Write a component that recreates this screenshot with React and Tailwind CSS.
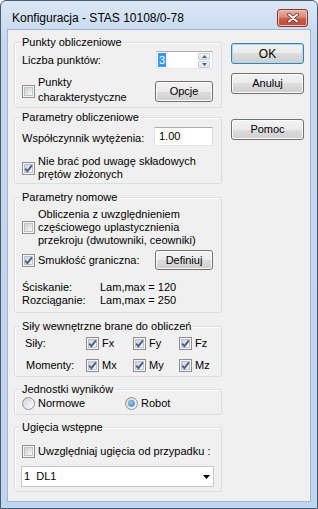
import React from 'react';

function Check({ checked }) {
  return (
    <span className="relative flex h-[13px] w-[13px] shrink-0 items-center justify-center border border-[#8e8f8f] bg-[#f4f4f4]">
      <span className="h-[9px] w-[9px] border border-[#c0c4ca] bg-[linear-gradient(135deg,#cdd1d6,#f7f7f7)]" />
      {checked && (
        <svg className="absolute left-0 top-0" width="11" height="11" viewBox="0 0 11 11">
          <path d="M2.2 5.6 L4.4 8.2 L8.9 2.4" fill="none" stroke="#4a5f97" strokeWidth="1.9" />
        </svg>
      )}
    </span>
  );
}

function Radio({ checked }) {
  return (
    <span className="flex h-[13px] w-[13px] shrink-0 items-center justify-center rounded-full border border-[#8e8f8f] bg-[linear-gradient(135deg,#cfd3d8,#ffffff)]">
      {checked && (
        <span className="h-[5px] w-[5px] rounded-full bg-[radial-gradient(circle_at_40%_35%,#9fd8fb,#1a64ad)] shadow-[0_0_0_1px_#6aa5d6]" />
      )}
    </span>
  );
}

function Btn({ children, primary, className }) {
  return (
    <div
      className={`flex shrink-0 items-center justify-center rounded-[3px] border bg-[linear-gradient(#f2f2f2_0%,#ebebeb_50%,#dddddd_50%,#cfcfcf_100%)] ${
        primary
          ? 'border-[#3c7fb1] shadow-[inset_0_0_0_1px_#a6def8]'
          : 'border-[#707070] shadow-[inset_0_0_0_1px_#fcfcfc]'
      } ${className}`}
    >
      {children}
    </div>
  );
}

function Group({ title, className, children }) {
  return (
    <div className={`relative shrink-0 rounded-[3px] border border-[#d5dfe5] shadow-[inset_1px_1px_0_#ffffff] ${className}`}>
      <span className="absolute -top-[7px] left-[5px] bg-[#f0f0f0] px-[2px] leading-[13px]">{title}</span>
      {children}
    </div>
  );
}

function CheckLabel({ checked, children }) {
  return (
    <div className="flex items-center gap-[3px]">
      <Check checked={checked} />
      <span className="whitespace-nowrap leading-[13px]">{children}</span>
    </div>
  );
}

export default function App() {
  return (
    <div className="h-[509px] w-[318px] overflow-hidden font-['Liberation_Sans',Arial,sans-serif] text-[11px] text-black">
      <div className="flex h-full w-full flex-col rounded-t-[6px] border border-[#4a5b70] bg-[linear-gradient(#dbe7f5,#c4d8ef_40px,#c0d5ee)] px-[6px] pb-[6px]">
        {/* title bar */}
        <div className="flex h-[28px] shrink-0 items-start justify-between pl-[5px] pr-[3px] pt-[8px]">
          <span className="text-[12px] leading-[18px]">Konfiguracja - STAS 10108/0-78</span>
          <div className="flex h-[18px] w-[31px] items-center justify-center rounded-[3px] border border-[#8a352b] bg-[linear-gradient(#eab1a6_0%,#d98a7b_45%,#c75a47_55%,#c24a36_100%)] shadow-[inset_0_0_0_1px_#f0c3ba]">
            <svg width="12" height="10" viewBox="0 0 12 10">
              <path d="M2 1.5 L10 8.5 M10 1.5 L2 8.5" stroke="#6e2a22" strokeWidth="3.6" strokeLinecap="round" />
              <path d="M2 1.5 L10 8.5 M10 1.5 L2 8.5" stroke="#ffffff" strokeWidth="2" strokeLinecap="round" />
            </svg>
          </div>
        </div>

        {/* client area */}
        <div className="flex flex-1 border border-[#9fb6d2] bg-[#f0f0f0]">
          <div className="flex w-[214px] shrink-0 flex-col pl-[6px] pt-[12px]">
            <Group title="Punkty obliczeniowe" className="h-[66px] w-[208px] pl-[7px] pr-[8px] pt-[8px]">
              <div className="flex h-[18px] items-center justify-between">
                <span>Liczba punktów:</span>
                <div className="flex h-[18px] w-[57px] items-center border border-[#abadb3] border-l-[#e2e3ea] border-r-[#dbdfe6] border-b-[#e3e9ef] bg-white pl-[1px] pr-[2px]">
                  <span className="bg-[#3399ff] px-[1px] leading-[14px] text-white">3</span>
                  <div className="ml-auto flex h-[15px] w-[12px] flex-col gap-[1px]">
                    <div className="flex flex-1 items-center justify-center rounded-[1px] border border-[#c9cdd3] bg-[linear-gradient(#f3f6f9,#dde3ea)]">
                      <svg width="5" height="3" viewBox="0 0 5 3"><path d="M0 3 L2.5 0 L5 3 Z" fill="#4d5c72" /></svg>
                    </div>
                    <div className="flex flex-1 items-center justify-center rounded-[1px] border border-[#c9cdd3] bg-[linear-gradient(#f3f6f9,#dde3ea)]">
                      <svg width="5" height="3" viewBox="0 0 5 3"><path d="M0 0 L2.5 3 L5 0 Z" fill="#4d5c72" /></svg>
                    </div>
                  </div>
                </div>
              </div>
              <div className="mt-[12px] flex h-[21px] items-center justify-between">
                <div className="flex items-center gap-[3px]">
                  <Check />
                  <span className="mb-[3px] leading-[15px]">
                    Punkty
                    <br />
                    charakterystyczne
                  </span>
                </div>
                <Btn className="h-[21px] w-[58px]">Opcje</Btn>
              </div>
            </Group>

            <Group title="Parametry obliczeniowe" className="mt-[9px] h-[67px] w-[208px] pl-[7px] pr-[8px] pt-[9px]">
              <div className="flex h-[19px] items-center justify-between">
                <span className="mt-[3px]">Współczynnik wytężenia:</span>
                <div className="flex h-[19px] w-[59px] items-center border border-[#abadb3] border-l-[#e2e3ea] border-r-[#dbdfe6] border-b-[#e3e9ef] bg-white pl-[4px]">
                  1.00
                </div>
              </div>
              <div className="mt-[9px] flex items-center gap-[3px]">
                <Check checked />
                <span className="whitespace-nowrap leading-[13px]">
                  Nie brać pod uwagę składowych
                  <br />
                  prętów złożonych
                </span>
              </div>
            </Group>

            <Group title="Parametry nomowe" className="mt-[13px] h-[116px] w-[208px] pl-[7px] pr-[8px] pt-[10px]">
              <div className="flex items-center gap-[3px]">
                <Check />
                <span className="whitespace-nowrap leading-[13px]">
                  Obliczenia z uwzględnieniem
                  <br />
                  częściowego uplastycznienia
                  <br />
                  przekroju (dwutowniki, ceowniki)
                </span>
              </div>
              <div className="mt-[3px] flex h-[20px] items-center justify-between">
                <CheckLabel checked>Smukłość graniczna:</CheckLabel>
                <Btn className="h-[20px] w-[58px]">Definiuj</Btn>
              </div>
              <div className="mt-[11px] grid grid-cols-[78px_auto] leading-[13px]">
                <span>Ściskanie:</span>
                <span>Lam,max = 120</span>
                <span>Rozciąganie:</span>
                <span>Lam,max = 250</span>
              </div>
            </Group>

            <Group title="Siły wewnętrzne brane do obliczeń" className="mt-[13px] h-[51px] w-[208px] pl-[10px] pt-[10px]">
              <div className="grid grid-cols-[61px_47px_46px_auto] items-center gap-y-[9px]">
                <span className="leading-[13px]">Siły:</span>
                <CheckLabel checked>Fx</CheckLabel>
                <CheckLabel checked>Fy</CheckLabel>
                <CheckLabel checked>Fz</CheckLabel>
                <span className="ml-[1px] leading-[13px]">Momenty:</span>
                <CheckLabel checked>Mx</CheckLabel>
                <CheckLabel checked>My</CheckLabel>
                <CheckLabel checked>Mz</CheckLabel>
              </div>
            </Group>

            <Group title="Jednostki wyników" className="mt-[12px] h-[26px] w-[208px] pl-[7px] pt-[7px]">
              <div className="grid grid-cols-[103px_auto] items-center">
                <div className="flex items-center gap-[3px]">
                  <Radio />
                  <span className="leading-[13px]">Normowe</span>
                </div>
                <div className="flex items-center gap-[3px]">
                  <Radio checked />
                  <span className="leading-[13px]">Robot</span>
                </div>
              </div>
            </Group>

            <Group title="Ugięcia wstępne" className="mt-[12px] h-[65px] w-[208px] pl-[6px] pt-[17px]">
              <div className="ml-[1px]">
                <CheckLabel>Uwzględniaj ugięcia od przypadku :</CheckLabel>
              </div>
              <div className="mt-[8px] flex h-[21px] w-[193px] items-center border border-[#c3c6cc] bg-white pl-[2px] pr-[3px]">
                <span className="whitespace-pre">1  DL1</span>
                <svg className="ml-auto" width="7" height="4" viewBox="0 0 7 4">
                  <path d="M0 0 L7 0 L3.5 4 Z" fill="#000000" />
                </svg>
              </div>
            </Group>
          </div>

          <div className="ml-[9px] flex w-[73px] shrink-0 flex-col pt-[13px]">
            <Btn primary className="h-[21px] w-[73px] text-[12px]">OK</Btn>
            <Btn className="mt-[9px] h-[21px] w-[73px]">Anuluj</Btn>
            <Btn className="mt-[25px] h-[21px] w-[73px]">Pomoc</Btn>
          </div>
        </div>
      </div>
    </div>
  );
}
